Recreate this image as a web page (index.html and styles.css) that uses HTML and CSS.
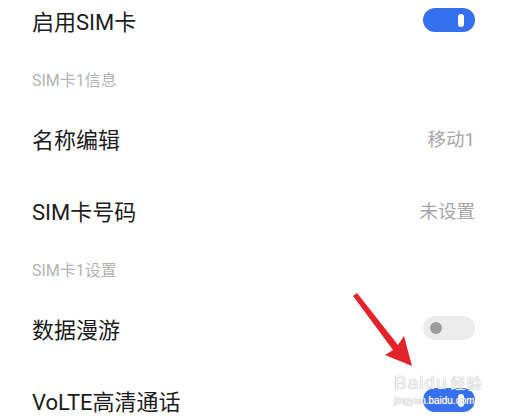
FILE: index.html
```html
<!DOCTYPE html>
<html lang="zh-CN">
<head>
  <meta charset="UTF-8">
  <title>SIM卡设置</title>
  <link rel="stylesheet" href="styles.css">
</head>
<body>
  <div class="settings">
    <div class="row">
      <span class="label">启用SIM卡</span>
      <span class="switch on"><span class="knob"></span></span>
    </div>

    <div class="section">SIM卡1信息</div>
    <div class="row">
      <span class="label">名称编辑</span>
      <span class="value">移动1</span>
    </div>
    <div class="row">
      <span class="label">SIM卡号码</span>
      <span class="value">未设置</span>
    </div>

    <div class="section">SIM卡1设置</div>
    <div class="row">
      <span class="label">数据漫游</span>
      <span class="switch off"><span class="knob"></span></span>
    </div>
    <div class="row">
      <span class="label">VoLTE高清通话</span>
      <span class="switch on"><span class="knob"></span></span>
    </div>
  </div>

  <!-- flecha roja encima de la pantalla -->
  <svg class="arrow" width="70" height="80" viewBox="0 0 70 80">
    <path d="M1 4 L5 1 L46 53 L52 44 L60 74 L33 63 L41 58 Z" fill="#e3232a"/>
  </svg>

  <!-- marca de agua -->
  <div class="watermark">
    <div class="wm-top"><span class="wm-bai">Bai</span><span class="wm-du">du</span><span class="wm-cn">经验</span></div>
    <div class="wm-url">jingyan.baidu.com</div>
  </div>
</body>
</html>
```

FILE: styles.css
```css
body {
  margin: 0;
  background: #fff;
  font-family: Roboto, "Noto Sans CJK SC", sans-serif;
  overflow: hidden;
  height: 418px;
  position: relative;
}
.settings {
  margin-top: -16px;
  padding: 0 39px 0 32px;
}
.row {
  height: 72px;
  display: flex;
  align-items: center;
  justify-content: space-between;
}
.label {
  font-size: 22px;
  color: #1c1c1c;
}
.value {
  font-size: 18.5px;
  color: #a6a6a6;
}
.section {
  height: 46px;
  display: flex;
  align-items: center;
  font-size: 16px;
  color: #b4b4b4;
}
/* interruptores */
.switch {
  width: 52px;
  height: 24px;
  border-radius: 12px;
  display: flex;
  align-items: center;
  box-sizing: border-box;
}
.switch.on {
  background: #3570ee;
  justify-content: flex-end;
  padding-right: 11px;
}
.switch.on .knob {
  width: 6px;
  height: 13px;
  border-radius: 3px;
  background: #fff;
}
.switch.off {
  background: #ececec;
  padding-left: 7px;
}
.switch.off .knob {
  width: 12px;
  height: 12px;
  border-radius: 50%;
  background: #9c9c9c;
}
.arrow {
  position: absolute;
  left: 352px;
  top: 292px;
}
.watermark {
  position: absolute;
  left: 394px;
  top: 372px;
  width: 90px;
  color: rgba(255, 255, 255, 0.85);
  text-shadow: 0 0 1px #bbb, 0 0 1px #bbb;
  font-family: "Liberation Sans", "Noto Sans CJK SC", sans-serif;
}
.wm-top {
  font-size: 19px;
  line-height: 22px;
  letter-spacing: 1px;
}
.wm-cn {
  font-size: 15px;
  margin-left: 3px;
}
.wm-url {
  font-size: 10px;
  line-height: 12px;
  color: rgba(255, 255, 255, 0.9);
}
```
